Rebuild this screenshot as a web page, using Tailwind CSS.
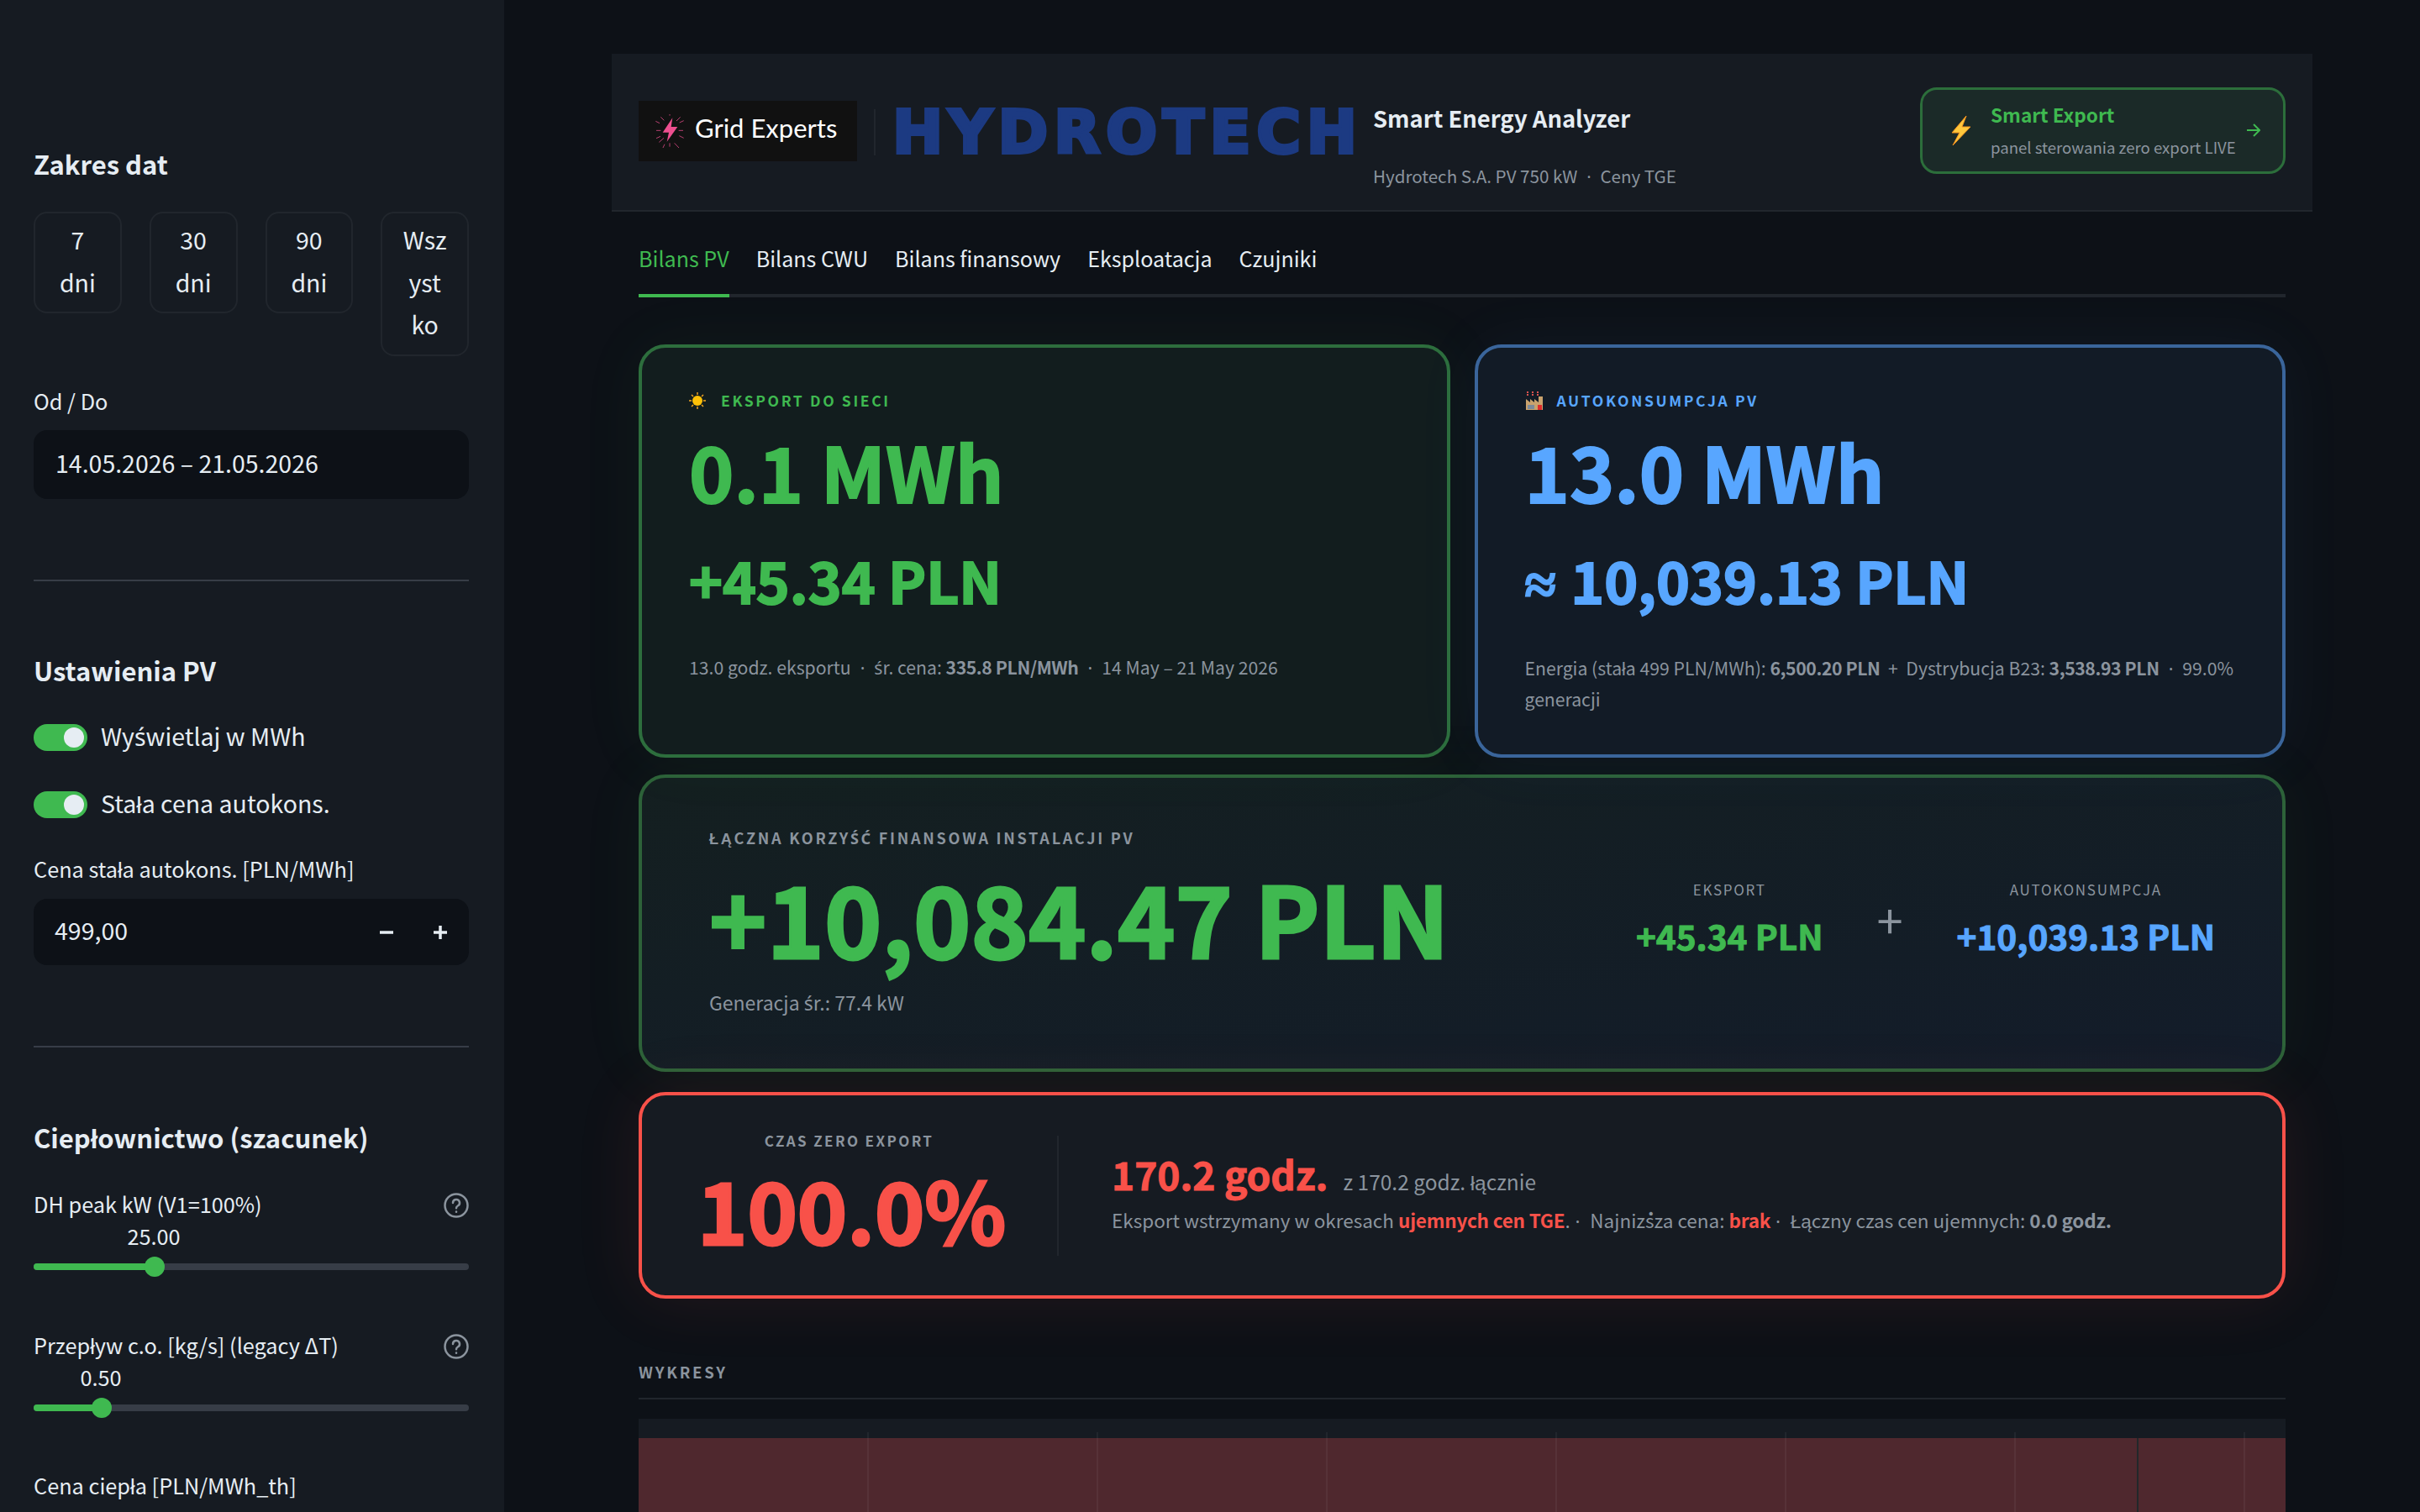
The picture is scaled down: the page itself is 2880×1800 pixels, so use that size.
<!DOCTYPE html>
<html lang="pl">
  <head>
    <meta charset="UTF-8" />
    <meta name="viewport" content="width=device-width, initial-scale=1.0" />
    <title>Smart Energy Analyzer</title>
    <script src="https://cdn.jsdelivr.net/npm/@tailwindcss/browser@4"></script>
  </head>
  <body class="bg-[#0d1117] font-['Noto_Sans_CJK_SC',sans-serif] text-[#e6edf3]">
    <div class="flex h-[1800px] w-[2880px] overflow-hidden">
      <!-- sidebar -->
      <aside class="w-[600px] shrink-0 bg-[#161b22] px-[40px] pt-[172px] pr-[42px] h-[1800px] overflow-hidden">
        <h2 class="text-[31px] leading-[46px] font-bold">Zakres dat</h2>
        <div class="grid grid-cols-4 gap-[33px] mt-[34px] items-start h-[172px]">
          <button class="border-2 border-[#21262d] rounded-[16px] pt-[6px] pb-[10px] text-[28.5px] leading-[50.5px] text-center">7<br />dni</button>
          <button class="border-2 border-[#21262d] rounded-[16px] pt-[6px] pb-[10px] text-[28.5px] leading-[50.5px] text-center">30<br />dni</button>
          <button class="border-2 border-[#21262d] rounded-[16px] pt-[6px] pb-[10px] text-[28.5px] leading-[50.5px] text-center">90<br />dni</button>
          <button class="border-2 border-[#21262d] rounded-[16px] pt-[6px] pb-[10px] text-[28.5px] leading-[50.5px] text-center">Wsz<br />yst<br />ko</button>
        </div>
        <div class="mt-[33px] text-[25.3px] leading-[40px]">Od / Do</div>
        <div class="mt-[15px] h-[82px] rounded-[16px] bg-[#0d1117] flex items-center px-[26px] pb-[4px] text-[28.5px]">14.05.2026 – 21.05.2026</div>
        <div class="mt-[96px] h-[2px] bg-[#373d47]"></div>

        <h2 class="mt-[83px] text-[31px] leading-[46px] font-bold">Ustawienia PV</h2>
        <div class="mt-[41px] h-[32px] flex items-center gap-[16px] text-[28.5px] leading-[32px]">
          <span class="w-[64px] h-[32px] rounded-full bg-[#3fb950] flex items-center justify-end pr-[4px]"><span class="w-[24px] h-[24px] rounded-full bg-[#e6edf3]"></span></span>
          <span class="pb-[4px]">Wy<span class="font-['Noto_Sans']">ś</span>wietlaj w MWh</span>
        </div>
        <div class="mt-[48px] h-[32px] flex items-center gap-[16px] text-[28.5px] leading-[32px]">
          <span class="w-[64px] h-[32px] rounded-full bg-[#3fb950] flex items-center justify-end pr-[4px]"><span class="w-[24px] h-[24px] rounded-full bg-[#e6edf3]"></span></span>
          <span class="pb-[4px]">Stała cena autokons.</span>
        </div>
        <div class="mt-[40px] text-[25.3px] leading-[40px]">Cena stała autokons. [PLN/MWh]</div>
        <div class="mt-[16px] h-[79px] rounded-[16px] bg-[#0d1117] flex items-center pl-[25px] pr-[26px] text-[28.5px]">
          <span class="pb-[4px]">499,00</span>
          <svg class="ml-auto" width="16" height="16" viewBox="0 0 16 16"><path d="M0 8h16" stroke="#e6edf3" stroke-width="3.5" /></svg>
          <svg class="ml-[48px]" width="16" height="16" viewBox="0 0 16 16"><path d="M0 8h16M8 0v16" stroke="#e6edf3" stroke-width="3.5" /></svg>
        </div>
        <div class="mt-[96px] h-[2px] bg-[#373d47]"></div>

        <h2 class="mt-[84px] text-[31px] leading-[46px] font-bold">Ciepłownictwo (szacunek)</h2>
        <div class="mt-[38px] h-[40px] flex items-center justify-between text-[25.3px] leading-[40px]">
          <span class="pb-[4px]">DH peak kW (V1=100%)</span>
          <svg width="30" height="30" viewBox="0 0 30 30" fill="none" stroke="#8b949e" stroke-width="2.5" stroke-linecap="round"><circle cx="15" cy="15" r="13.5" /><path d="M11 12a4 4 0 1 1 5.8 3.5c-1.3.7-1.8 1.5-1.8 2.8" /><path d="M15 22.5v.2" /></svg>
        </div>
        <div class="-mt-[2px] w-[286px] text-center text-[25.3px] leading-[36px]">25.00</div>
        <div class="relative mt-[7px] h-[24px] flex items-center">
          <div class="w-full h-[8px] rounded-full bg-[#373d47]"></div>
          <div class="absolute left-0 w-[143px] h-[8px] rounded-full bg-[#3fb950]"></div>
          <div class="absolute left-[132px] w-[24px] h-[24px] rounded-full bg-[#3fb950]"></div>
        </div>
        <div class="mt-[63px] h-[40px] flex items-center justify-between text-[25.3px] leading-[40px]">
          <span class="pb-[4px]">Przepływ c.o. [kg/s] (legacy ΔT)</span>
          <svg width="30" height="30" viewBox="0 0 30 30" fill="none" stroke="#8b949e" stroke-width="2.5" stroke-linecap="round"><circle cx="15" cy="15" r="13.5" /><path d="M11 12a4 4 0 1 1 5.8 3.5c-1.3.7-1.8 1.5-1.8 2.8" /><path d="M15 22.5v.2" /></svg>
        </div>
        <div class="-mt-[2px] w-[160px] text-center text-[25.3px] leading-[36px]">0.50</div>
        <div class="relative mt-[7px] h-[24px] flex items-center">
          <div class="w-full h-[8px] rounded-full bg-[#373d47]"></div>
          <div class="absolute left-0 w-[80px] h-[8px] rounded-full bg-[#3fb950]"></div>
          <div class="absolute left-[69px] w-[24px] h-[24px] rounded-full bg-[#3fb950]"></div>
        </div>
        <div class="mt-[60px] text-[25.3px] leading-[40px]">Cena ciepła [PLN/MWh_th]</div>
      </aside>

      <!-- main -->
      <main class="flex-1 px-[128px] pt-[64px] h-[1800px] overflow-hidden">
        <header class="h-[188px] bg-[#161b22] border-b-2 border-[#21262d] px-[32px] flex items-center">
          <div class="w-[260px] h-[72px] mb-[3px] bg-[#111111] flex items-center shrink-0">
            <svg class="ml-[17px] shrink-0" width="40" height="40" viewBox="50 80 120 120" fill="none">
              <g stroke="#ec4f8f" stroke-width="3" stroke-opacity="0.75">
                <path d="M110 72v13M110 183v13M62 138h16M142 138h16M78 90l12 12M148 90l-14 14M72 180l17-15M143 200l-16-17M60 105l14 7M160 103l-15 7M62 166l15-7M160 165l-16-8M85 202l7-15" />
              </g>
              <path d="M120 93L85 145h22l-7 33 38-53h-23z" fill="#ec4f8f" />
            </svg>
            <span class="ml-[10px] mb-[6px] font-['Lato',sans-serif] text-[31px] leading-none text-white">Grid Experts</span>
          </div>
          <div class="ml-[20px] w-[2px] h-[55px] bg-[#21262d] shrink-0"></div>
          <div class="ml-[20px] font-['DejaVu_Sans',sans-serif] font-bold text-[72px] leading-[55px] h-[55px] w-[550px] tracking-[6.6px] text-[#1c3a82] [-webkit-text-stroke-width:4px] whitespace-nowrap shrink-0">HYDROTECH</div>
          <div class="self-start mt-[54px] ml-[22px] shrink-0">
            <div class="text-[27.4px] leading-[44px] font-bold">Smart Energy Analyzer</div>
            <div class="mt-[29px] text-[20.6px] leading-[36px] text-[#8b949e]">Hydrotech S.A. PV 750 kW<span class="font-['Noto_Sans']">&nbsp;&nbsp;·&nbsp;&nbsp;</span>Ceny TGE</div>
          </div>
          <div class="ml-auto mb-[4px] w-[435px] h-[103px] rounded-[20px] border-[3px] border-[#2c6e3b] bg-[#1b2a28] flex items-center pl-[33px] pr-[27px] shrink-0">
            <svg class="shrink-0" width="25" height="35" viewBox="0 0 25 35"><path d="M19 0L2 20h9L3 35l21-22H14z" fill="#ffc83d" stroke="#f7931e" stroke-width="1" /></svg>
            <div class="ml-[23px]">
              <div class="text-[22.6px] leading-[36px] font-bold text-[#3fb950]">Smart Export</div>
              <div class="mt-[4px] text-[18.6px] leading-[32px] text-[#8b949e] whitespace-nowrap">panel sterowania zero export LIVE</div>
            </div>
            <svg class="ml-auto shrink-0" width="16" height="16" viewBox="0 0 16 16" fill="none" stroke="#3fb950" stroke-width="2"><path d="M0 8h15M8 1l7 7-7 7" /></svg>
          </div>
        </header>

        <div class="px-[32px]">
          <nav class="mt-[35px] flex gap-[32px] border-b-4 border-[#21262d] text-[25.1px] leading-[40px]">
            <span class="pb-[23px] -mb-[4px] border-b-4 border-[#3fb950] text-[#3fb950]">Bilans PV</span>
            <span class="pb-[23px]">Bilans CWU</span>
            <span class="pb-[23px]">Bilans finansowy</span>
            <span class="pb-[23px]">Eksploatacja</span>
            <span class="pb-[23px]">Czujniki</span>
          </nav>

          <div class="mt-[56px] grid grid-cols-2 gap-[29px]">
            <section class="h-[492px] rounded-[32px] border-4 border-[#2d6e3d] bg-[#121d1e] shadow-[0_0_80px_rgba(63,185,80,0.06)] pl-[56px] pr-[40px] pt-[48px]">
              <div class="flex items-center gap-[18px] text-[17.5px] leading-[30px] font-bold tracking-[0.15em] text-[#3fb950]">
                <svg width="20" height="20" viewBox="0 0 20 20"><g stroke="#f5a623" stroke-width="1.4"><path d="M10 0v3M10 17v3M0 10h3M17 10h3M3 3l2 2M15 15l2 2M3 17l2-2M15 5l2-2" /></g><circle cx="10" cy="10" r="6" fill="#ffc107" /></svg>
                EKSPORT DO SIECI
              </div>
              <div class="mt-[8px] text-[90.5px] leading-[120px] font-bold [-webkit-text-stroke-width:2px] text-[#3fb950]">0.1 MWh</div>
              <div class="mt-[19px] text-[67.7px] leading-[100px] font-bold [-webkit-text-stroke-width:2px] text-[#3fb950]">+45.34 PLN</div>
              <div class="mt-[37px] text-[21.2px] leading-[36px] text-[#8b949e]">13.0 godz. eksportu<span class="font-['Noto_Sans']">&nbsp;&nbsp;·&nbsp;&nbsp;</span><span class="font-['Noto_Sans']">ś</span>r. cena: <b class="tracking-[-0.4px]">335.8 PLN/MWh</b><span class="font-['Noto_Sans']">&nbsp;&nbsp;·&nbsp;&nbsp;</span>14 May – 21 May 2026</div>
            </section>
            <section class="h-[492px] rounded-[32px] border-4 border-[#3a659b] bg-[#121b26] shadow-[0_0_80px_rgba(88,166,255,0.06)] pl-[56px] pr-[40px] pt-[48px]">
              <div class="flex items-center gap-[16px] text-[17.5px] leading-[30px] font-bold tracking-[0.15em] text-[#58a6ff]">
                <svg width="22" height="22" viewBox="0 0 22 22"><path d="M1 22V9l5 4V9l5 4V9l5 4V6h5v16z" fill="#c9a26d" /><path d="M3 0v6M9 0v6M15 0v6" stroke="#d9534f" stroke-width="2" stroke-dasharray="2 1" /><rect x="15" y="16" width="5" height="6" fill="#e02b2b" /><rect x="3" y="16" width="8" height="5" fill="#7d8a99" /></svg>
                AUTOKONSUMPCJA PV
              </div>
              <div class="mt-[8px] text-[90.5px] leading-[120px] font-bold [-webkit-text-stroke-width:2px] text-[#58a6ff]">13.0 MWh</div>
              <div class="mt-[19px] text-[67.7px] leading-[100px] font-bold [-webkit-text-stroke-width:2px] text-[#58a6ff]"><span class="font-['Noto_Sans']">≈ </span>10,039.13 PLN</div>
              <div class="mt-[34px] text-[21.2px] leading-[36px] text-[#8b949e]">Energia (stała 499 PLN/MWh): <b class="tracking-[-0.4px]">6,500.20 PLN</b> &nbsp;+&nbsp; Dystrybucja B23: <b class="tracking-[-0.4px]">3,538.93 PLN</b><span class="font-['Noto_Sans']">&nbsp;&nbsp;·&nbsp; </span>99.0% generacji</div>
            </section>
          </div>

          <section class="mt-[20px] h-[354px] rounded-[32px] border-4 border-[#2d6239] bg-gradient-to-br from-[#141f20] to-[#131c2a] shadow-[0_0_80px_rgba(63,185,80,0.06)] pl-[80px] pr-[80px] flex items-center justify-between">
            <div class="mb-[4px]">
              <div class="text-[18.1px] leading-[30px] font-bold tracking-[0.15em] text-[#8b949e]">ŁĄCZNA KORZY<span class="font-['Noto_Sans']">ŚĆ</span> FINANSOWA INSTALACJI PV</div>
              <div class="mt-[2px] text-[116px] leading-[150px] font-bold [-webkit-text-stroke-width:3px] text-[#3fb950]">+10,084.47 PLN</div>
              <div class="mt-[10px] text-[23px] leading-[36px] text-[#8b949e]">Generacja <span class="font-['Noto_Sans']">ś</span>r.: 77.4 kW</div>
            </div>
            <div class="flex items-center gap-[64px] mb-[11px]">
              <div class="text-center">
                <div class="text-[17px] leading-[28px] tracking-[0.1em] text-[#8b949e]">EKSPORT</div>
                <div class="mt-[13px] text-[40.5px] leading-[56px] font-bold [-webkit-text-stroke-width:1px] text-[#3fb950]">+45.34 PLN</div>
              </div>
              <div class="text-[56px] leading-[60px] text-[#8b949e]">+</div>
              <div class="text-center">
                <div class="text-[17px] leading-[28px] tracking-[0.1em] text-[#8b949e]">AUTOKONSUMPCJA</div>
                <div class="mt-[13px] text-[40.5px] leading-[56px] font-bold [-webkit-text-stroke-width:1px] text-[#58a6ff]">+10,039.13 PLN</div>
              </div>
            </div>
          </section>

          <section class="mt-[24px] h-[246px] rounded-[32px] border-4 border-[#f85149] bg-[#161b22] shadow-[0_0_80px_rgba(248,81,73,0.1)] pl-[66px] flex items-center">
            <div class="text-center w-[361px]">
              <div class="text-[17px] leading-[30px] font-bold tracking-[0.14em] text-[#8b949e]">CZAS ZERO EXPORT</div>
              <div class="text-[100.7px] leading-[130px] font-bold [-webkit-text-stroke-width:3px] text-[#f85149]">100.0%</div>
            </div>
            <div class="ml-[67px] w-[2px] h-[143px] bg-[#21262d]"></div>
            <div class="ml-[63px] mb-[7px]">
              <div><span class="text-[46px] leading-[60px] font-bold [-webkit-text-stroke-width:1px] text-[#f85149]">170.2 godz.</span><span class="ml-[18px] text-[24.5px] text-[#8b949e]">z 170.2 godz. łącznie</span></div>
              <div class="mt-[7px] text-[22.5px] leading-[36px] text-[#8b949e]">Eksport wstrzymany w okresach <b class="text-[#f85149] tracking-[-0.2px]">ujemnych cen TGE</b>.<span class="font-['Noto_Sans']">&nbsp;·&nbsp;&nbsp;</span>Najniższa cena: <b class="text-[#f85149] tracking-[-0.2px]">brak</b><span class="font-['Noto_Sans']">&nbsp;·&nbsp;&nbsp;</span>Łączny czas cen ujemnych: <b class="tracking-[-0.2px]">0.0 godz.</b></div>
            </div>
          </section>

          <div class="mt-[72px] text-[18.5px] leading-[30px] font-bold tracking-[0.15em] text-[#8b949e]">WYKRESY</div>
          <div class="mt-[16px] h-[2px] bg-[#21262d]"></div>
          <svg class="mt-[23px] block" width="1960" height="130" viewBox="0 0 1960 130">
            <rect width="1960" height="130" fill="#161b22" />
            <rect y="23" width="1960" height="107" fill="#4f282e" />
            <path d="M273 16V130M546 16V130M819 16V130M1092 16V130M1365 16V130M1638 16V130M1911 16V130" stroke="#ffffff" stroke-opacity="0.05" stroke-width="2" />
            <path d="M1784 23V130" stroke="#22282a" stroke-width="2" />
          </svg>
        </div>
      </main>
    </div>
  </body>
</html>
